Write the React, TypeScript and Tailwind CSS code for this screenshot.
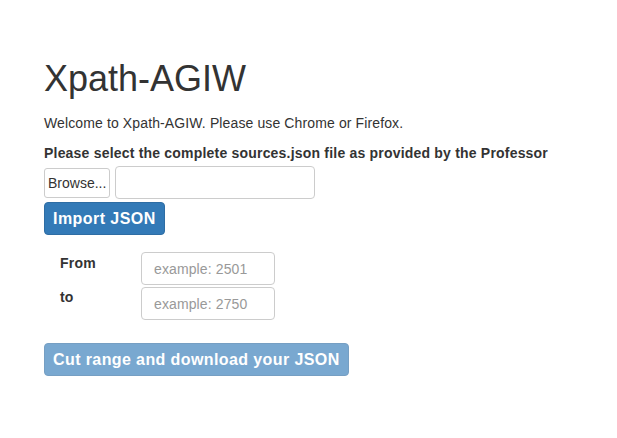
import React from "react";

const App: React.FC = () => {
  return (
    <div className="min-h-[438px] bg-white pl-[44px] pt-[59px] text-[14px] leading-[20px] text-[#333] font-['Liberation_Sans',Arial,sans-serif]">
      <h1 className="text-[36px] leading-[40px] font-normal">Xpath-AGIW</h1>
      <p className="mt-[14px] tracking-[0.12px]">Welcome to Xpath-AGIW. Please use Chrome or Firefox.</p>
      <p className="mt-[10px] font-bold tracking-[0.2px]">
        Please select the complete sources.json file as provided by the Professor
      </p>
      <div className="mt-[3px] flex items-center gap-[5px]">
        <button className="h-[30px] rounded-[3px] border border-[#ccc] bg-white px-[3px] text-[14px] text-[#333]">
          Browse...
        </button>
        <input
          type="text"
          className="h-[33px] w-[200px] rounded-[4px] border border-[#ccc] px-[12px] outline-none"
        />
      </div>
      <button className="mt-[3px] h-[33px] rounded-[4px] border border-[#2e6da4] bg-[#337ab7] px-[8px] text-[16px] font-bold tracking-[0.45px] text-white">
        Import JSON
      </button>
      <div className="mt-[17px] flex flex-col gap-[2px] pl-[16px]">
        <div className="flex items-start">
          <label className="w-[81px] pt-[1px] font-bold tracking-[0.2px]">From</label>
          <input
            type="text"
            placeholder="example: 2501"
            className="h-[33px] w-[134px] rounded-[4px] border border-[#ccc] px-[12px] text-[14px] tracking-[0.12px] outline-none placeholder:text-[#999]"
          />
        </div>
        <div className="flex items-start">
          <label className="w-[81px] font-bold tracking-[0.2px]">to</label>
          <input
            type="text"
            placeholder="example: 2750"
            className="h-[33px] w-[134px] rounded-[4px] border border-[#ccc] px-[12px] text-[14px] tracking-[0.12px] outline-none placeholder:text-[#999]"
          />
        </div>
      </div>
      <button
        disabled
        className="mt-[23px] h-[33px] rounded-[4px] border border-[#2e6da4] bg-[#337ab7] px-[8px] text-[16px] font-bold tracking-[0.4px] text-white opacity-65"
      >
        Cut range and download your JSON
      </button>
    </div>
  );
};

export default App;
